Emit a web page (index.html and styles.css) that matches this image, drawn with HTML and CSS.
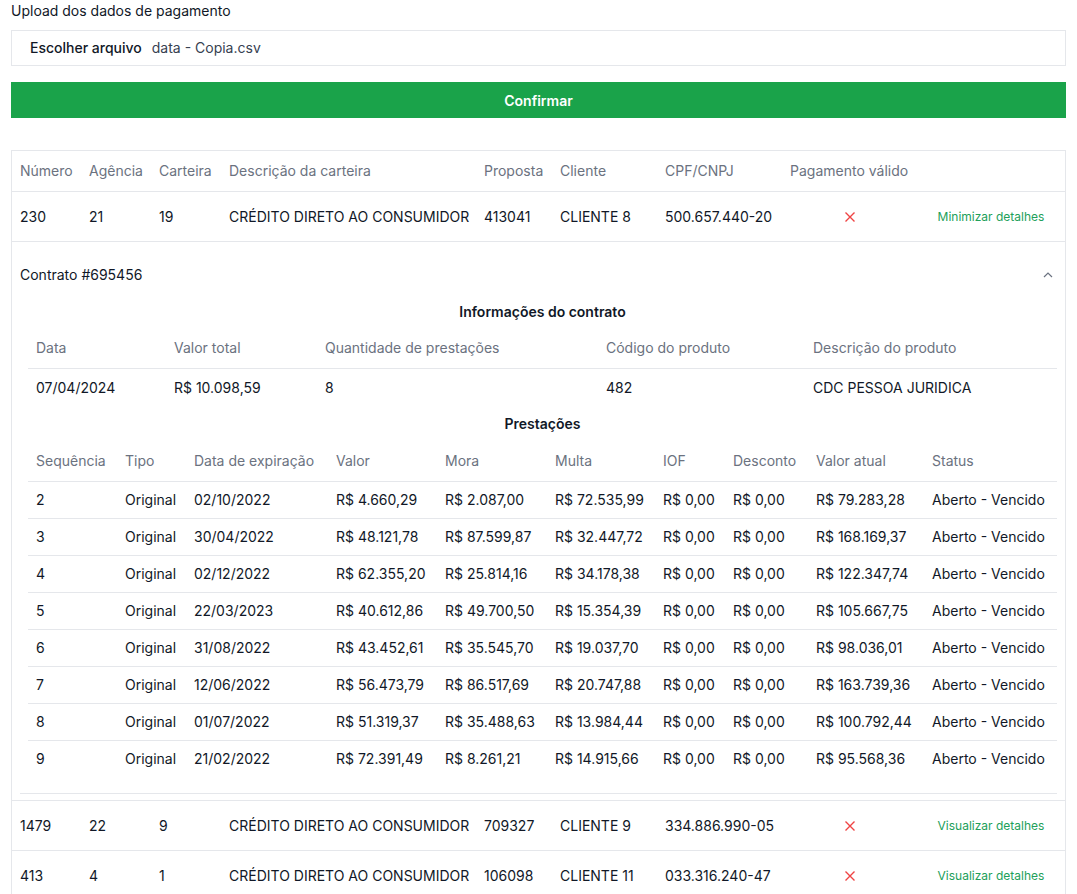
FILE: index.html
```html
<!DOCTYPE html>
<html lang="pt-BR">
<head>
<meta charset="utf-8">
<title>Upload dos dados de pagamento</title>
<link rel="stylesheet" href="styles.css">
</head>
<body>
<div class="page">
  <div class="upload-label">Upload dos dados de pagamento</div>
  <div class="file-box">
    <span class="file-btn">Escolher arquivo</span>
    <span class="file-name">data - Copia.csv</span>
  </div>
  <button class="confirm">Confirmar</button>

  <div class="table-wrap">
    <table class="main">
      <colgroup>
        <col style="width:69px"><col style="width:70px"><col style="width:70px"><col style="width:255px"><col style="width:76px"><col style="width:105px"><col style="width:125px"><col style="width:135px"><col style="width:148px">
      </colgroup>
      <thead>
        <tr>
          <th>Número</th><th>Agência</th><th>Carteira</th><th>Descrição da carteira</th><th>Proposta</th><th>Cliente</th><th>CPF/CNPJ</th><th>Pagamento válido</th><th></th>
        </tr>
      </thead>
      <tbody>
        <tr class="row">
          <td>230</td><td>21</td><td>19</td><td>CRÉDITO DIRETO AO CONSUMIDOR</td><td>413041</td><td>CLIENTE 8</td><td>500.657.440-20</td>
          <td class="center"><svg class="x" width="12" height="12" viewBox="0 0 12 12"><path d="M1.5 1.5 L10.5 10.5 M10.5 1.5 L1.5 10.5"/></svg></td>
          <td class="center"><a class="link">Minimizar detalhes</a></td>
        </tr>
        <tr class="panel-row">
          <td colspan="9" class="panel-cell">
            <div class="accordion">
              <div class="acc-head">
                <span>Contrato #695456</span>
                <svg class="chev" width="12" height="12" viewBox="0 0 12 12"><path d="M2 8 L6 4 L10 8"/></svg>
              </div>
              <div class="acc-body">
                <div class="section-title title-info">Informações do contrato</div>
                <table class="inner info">
                  <colgroup>
                    <col style="width:138px"><col style="width:151px"><col style="width:281px"><col style="width:207px"><col style="width:252px">
                  </colgroup>
                  <tr class="ihead"><th>Data</th><th>Valor total</th><th>Quantidade de prestações</th><th>Código do produto</th><th>Descrição do produto</th></tr>
                  <tr class="irow"><td>07/04/2024</td><td>R$ 10.098,59</td><td>8</td><td>482</td><td>CDC PESSOA JURIDICA</td></tr>
                </table>
                <div class="section-title title-prest">Prestações</div>
                <table class="inner prest">
                  <colgroup>
                    <col style="width:89px"><col style="width:69px"><col style="width:142px"><col style="width:109px"><col style="width:110px"><col style="width:108px"><col style="width:70px"><col style="width:83px"><col style="width:116px"><col style="width:133px">
                  </colgroup>
                  <thead>
                    <tr><th>Sequência</th><th>Tipo</th><th>Data de expiração</th><th>Valor</th><th>Mora</th><th>Multa</th><th>IOF</th><th>Desconto</th><th>Valor atual</th><th>Status</th></tr>
                  </thead>
                  <tbody>
                    <tr><td>2</td><td>Original</td><td>02/10/2022</td><td>R$ 4.660,29</td><td>R$ 2.087,00</td><td>R$ 72.535,99</td><td>R$ 0,00</td><td>R$ 0,00</td><td>R$ 79.283,28</td><td>Aberto - Vencido</td></tr>
                    <tr><td>3</td><td>Original</td><td>30/04/2022</td><td>R$ 48.121,78</td><td>R$ 87.599,87</td><td>R$ 32.447,72</td><td>R$ 0,00</td><td>R$ 0,00</td><td>R$ 168.169,37</td><td>Aberto - Vencido</td></tr>
                    <tr><td>4</td><td>Original</td><td>02/12/2022</td><td>R$ 62.355,20</td><td>R$ 25.814,16</td><td>R$ 34.178,38</td><td>R$ 0,00</td><td>R$ 0,00</td><td>R$ 122.347,74</td><td>Aberto - Vencido</td></tr>
                    <tr><td>5</td><td>Original</td><td>22/03/2023</td><td>R$ 40.612,86</td><td>R$ 49.700,50</td><td>R$ 15.354,39</td><td>R$ 0,00</td><td>R$ 0,00</td><td>R$ 105.667,75</td><td>Aberto - Vencido</td></tr>
                    <tr><td>6</td><td>Original</td><td>31/08/2022</td><td>R$ 43.452,61</td><td>R$ 35.545,70</td><td>R$ 19.037,70</td><td>R$ 0,00</td><td>R$ 0,00</td><td>R$ 98.036,01</td><td>Aberto - Vencido</td></tr>
                    <tr><td>7</td><td>Original</td><td>12/06/2022</td><td>R$ 56.473,79</td><td>R$ 86.517,69</td><td>R$ 20.747,88</td><td>R$ 0,00</td><td>R$ 0,00</td><td>R$ 163.739,36</td><td>Aberto - Vencido</td></tr>
                    <tr><td>8</td><td>Original</td><td>01/07/2022</td><td>R$ 51.319,37</td><td>R$ 35.488,63</td><td>R$ 13.984,44</td><td>R$ 0,00</td><td>R$ 0,00</td><td>R$ 100.792,44</td><td>Aberto - Vencido</td></tr>
                    <tr><td>9</td><td>Original</td><td>21/02/2022</td><td>R$ 72.391,49</td><td>R$ 8.261,21</td><td>R$ 14.915,66</td><td>R$ 0,00</td><td>R$ 0,00</td><td>R$ 95.568,36</td><td>Aberto - Vencido</td></tr>
                  </tbody>
                </table>
              </div>
            </div>
          </td>
        </tr>
        <tr class="row">
          <td>1479</td><td>22</td><td>9</td><td>CRÉDITO DIRETO AO CONSUMIDOR</td><td>709327</td><td>CLIENTE 9</td><td>334.886.990-05</td>
          <td class="center"><svg class="x" width="12" height="12" viewBox="0 0 12 12"><path d="M1.5 1.5 L10.5 10.5 M10.5 1.5 L1.5 10.5"/></svg></td>
          <td class="center"><a class="link">Visualizar detalhes</a></td>
        </tr>
        <tr class="row">
          <td>413</td><td>4</td><td>1</td><td>CRÉDITO DIRETO AO CONSUMIDOR</td><td>106098</td><td>CLIENTE 11</td><td>033.316.240-47</td>
          <td class="center"><svg class="x" width="12" height="12" viewBox="0 0 12 12"><path d="M1.5 1.5 L10.5 10.5 M10.5 1.5 L1.5 10.5"/></svg></td>
          <td class="center"><a class="link">Visualizar detalhes</a></td>
        </tr>
      </tbody>
    </table>
  </div>
</div>
</body>
</html>
```

FILE: styles.css
```css
* { box-sizing: border-box; }
html, body { margin: 0; padding: 0; background: #fff; }
body {
  font-family: Inter, "Noto Sans", "Liberation Sans", sans-serif;
  font-size: 14px;
  line-height: 20px;
  color: #111827;
}
.page { padding: 1px 11px 20px; }
.upload-label { color: #111827; }
.file-box {
  margin-top: 9px;
  height: 36px;
  border: 1px solid #e5e7eb;
  display: flex;
  align-items: center;
  padding: 0 18px 1px;
  gap: 10px;
}
.file-btn { font-weight: 500; color: #111827; }
.file-name { color: #374151; }
.confirm {
  display: block;
  width: 100%;
  margin-top: 16px;
  height: 36px;
  border: 0;
  background: #1aa34a;
  color: #fff;
  font-family: inherit;
  font-size: 14px;
  font-weight: 600;
}
.table-wrap {
  margin-top: 32px;
  border: 1px solid #e5e7eb;
}
table { border-collapse: collapse; table-layout: fixed; }
.main { width: 100%; }
.main th {
  text-align: left;
  font-weight: 400;
  color: #6b7280;
  padding: 10px 8px;
  border-bottom: 1px solid #e5e7eb;
  white-space: nowrap;
}
.main .row td {
  height: 50px;
  padding: 0 8px;
  border-bottom: 1px solid #e5e7eb;
  white-space: nowrap;
  vertical-align: middle;
}
.main td.center { text-align: center; }
.x { display: block; margin: 0 auto; }
.x path { stroke: #ef4444; stroke-width: 1.4; fill: none; }
.link { color: #22a05a; font-size: 12px; cursor: pointer; }
.panel-cell {
  padding: 0 8px 6px;
  border-bottom: 1px solid #e5e7eb;
}
.accordion { border-bottom: 1px solid #e5e7eb; padding-bottom: 16px; }
.acc-head {
  display: flex;
  justify-content: space-between;
  align-items: center;
  padding: 23px 3px 17px 0;
}
.chev { display: block; }
.chev path { stroke: #6b7280; stroke-width: 1.2; fill: none; }
.acc-body { padding-left: 8px; }
.section-title {
  text-align: center;
  font-weight: 600;
}
.title-info { margin-bottom: 6px; }
.title-prest { margin-bottom: 7px; }
.inner { width: 100%; }
.inner th {
  text-align: left;
  font-weight: 400;
  color: #6b7280;
  padding: 10px 8px;
  white-space: nowrap;
}
.inner td { padding: 8px; white-space: nowrap; }
.info .ihead th { border-bottom: 1px solid #e5e7eb; }
.irow td { padding-top: 9px; padding-bottom: 7px; }
.info { margin-bottom: 9px; }
.prest tbody tr { border-bottom: 1px solid #e5e7eb; }
.prest tbody tr:last-child { border-bottom: 0; }
```
